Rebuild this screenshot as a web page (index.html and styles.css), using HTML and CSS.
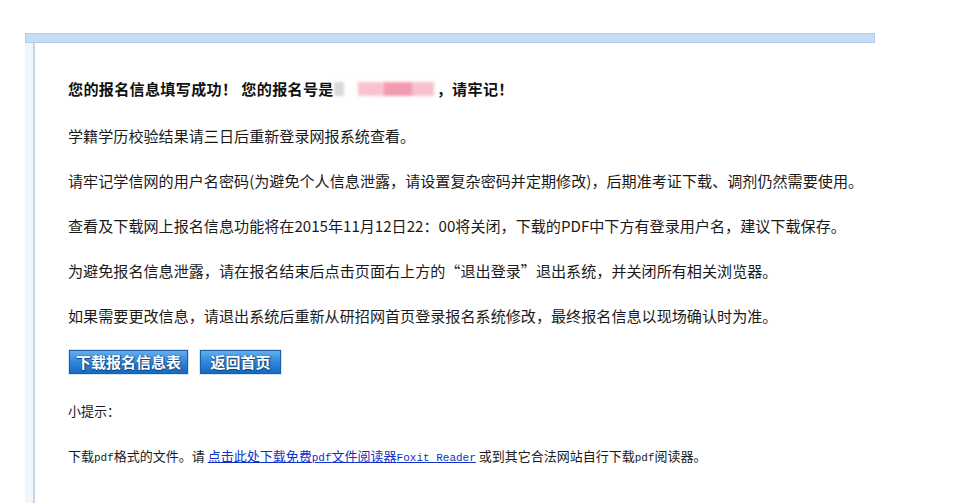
FILE: index.html
```html
<!DOCTYPE html>
<html lang="zh-CN">
<head>
  <meta charset="UTF-8">
  <meta name="viewport" content="width=device-width, initial-scale=1.0">
  <title>报名成功</title>
  <link rel="stylesheet" href="styles.css">
</head>
<body>

  <div class="frame">
    <div class="frame-bar"></div>
    <div class="frame-body">
      <div class="content">
        <p class="notice">您的报名信息填写成功！<span class="gap"></span>您的报名号是<span class="masked"><i></i><i></i><i></i><i></i></span>，请牢记！</p>
        <p>学籍学历校验结果请三日后重新登录网报系统查看。</p>
        <p>请牢记学信网的用户名密码(为避免个人信息泄露，请设置复杂密码并定期修改)，后期准考证下载、调剂仍然需要使用。</p>
        <p>查看及下载网上报名信息功能将在2015年11月12日22：00将关闭，下载的PDF中下方有登录用户名，建议下载保存。</p>
        <p>为避免报名信息泄露，请在报名结束后点击页面右上方的“退出登录”退出系统，并关闭所有相关浏览器。</p>
        <p>如果需要更改信息，请退出系统后重新从研招网首页登录报名系统修改，最终报名信息以现场确认时为准。</p>

        <div class="actions">
          <a class="btn btn-wide" href="#">下载报名信息表</a>
          <a class="btn" href="#">返回首页</a>
        </div>

        <p class="tip-title">小提示：</p>
        <p class="tip">下载<span class="latin">pdf</span>格式的文件。请 <a class="tip-link" href="#">点击此处下载免费<span class="latin">pdf</span>文件阅读器<span class="latin">Foxit Reader</span></a> 或到其它合法网站自行下载<span class="latin">pdf</span>阅读器。</p>
      </div>
    </div>
  </div>

</body>
</html>
```

FILE: styles.css
```css
body {
  margin: 0;
  background: #fff;
  font-family: "Noto Sans CJK SC", "Liberation Sans", sans-serif;
  color: #1a1a1a;
}
.frame {
  margin: 33px 0 0 25px;
  width: 850px;
}
.frame-bar {
  height: 8px;
  background-color: #c6ddf6;
  border: 1px solid #b2cce8;
}
.frame-body {
  border-left: 8px solid #f0f6fc;
}
.content {
  border-left: 2px solid #c6d6e8;
  padding: 35px 0 36px 33px;
}
.content p {
  margin: 0 0 25px;
  font-size: 15.1px;
  line-height: 20px;
  white-space: nowrap;
}
.content .notice {
  font-weight: bold;
  margin-bottom: 27px;
  color: #111;
  letter-spacing: 0.3px;
}
.gap {
  display: inline-block;
  width: 4px;
}
.masked {
  display: inline-block;
  vertical-align: middle;
  width: 103px;
  height: 18px;
  margin-top: -3px;
  position: relative;
  filter: blur(1.5px);
}
.masked i {
  position: absolute;
  top: 2px;
  height: 14px;
}
.masked i:nth-child(1) {
  left: 0;
  width: 10px;
  background: #d9d9db;
}
.masked i:nth-child(2) {
  left: 24px;
  width: 26px;
  background: #f7c3cf;
}
.masked i:nth-child(3) {
  left: 50px;
  width: 28px;
  background: #f29bb0;
}
.masked i:nth-child(4) {
  left: 78px;
  width: 22px;
  background: #f6c0cc;
}
.actions {
  display: flex;
  gap: 12px;
  margin: 1px 0 0 1px;
}
.btn {
  display: block;
  height: 22px;
  width: 79px;
  line-height: 22px;
  text-align: center;
  font-size: 15px;
  font-weight: bold;
  color: #fff;
  text-decoration: none;
  text-shadow: 0 1px 1px #0d3f78, 1px 0 1px #0d3f78;
  background: linear-gradient(#63aef0, #2f86da 50%, #176bc2);
  border: 1px solid #1b5ea8;
  box-shadow: 0 0 0 1px #d4e6f8;
}
.btn-wide {
  width: 117px;
}
.content .tip-title {
  margin: 27px 0 25px;
  font-size: 13px;
}
.content .tip {
  font-size: 13px;
  margin-bottom: 0;
}
.latin {
  font-family: "Liberation Mono", monospace;
  font-size: 11px;
}
.tip-link {
  color: #1030c8;
  text-decoration: underline;
}
```
